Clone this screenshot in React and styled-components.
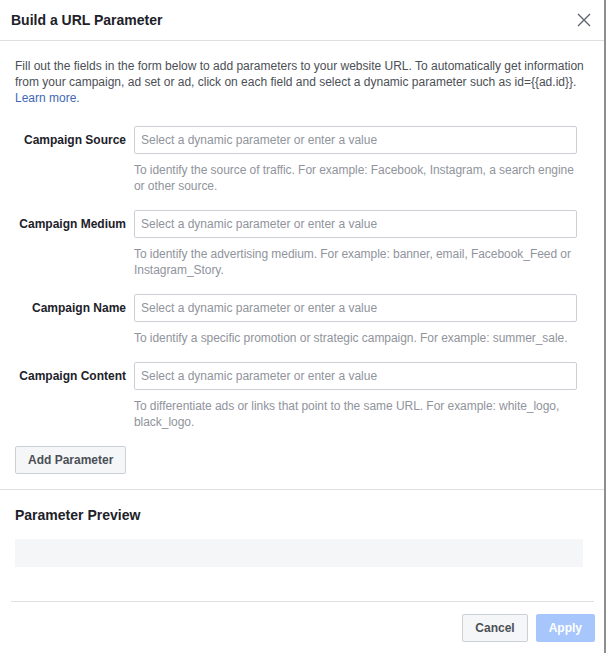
import { createGlobalStyle, styled } from "styled-components";

const GlobalStyle = createGlobalStyle`
  html, body {
    margin: 0;
    padding: 0;
    background: #fff;
  }
  body {
    font-family: "Liberation Sans", Arial, sans-serif;
    color: #1d2129;
  }
`;

const Dialog = styled.div`
  width: 606px;
  height: 653px;
  box-sizing: border-box;
  background: #fff;
  border-right: 2px solid #8f8f8f;
  display: flex;
  flex-direction: column;
`;

const Header = styled.div`
  height: 41px;
  box-sizing: border-box;
  border-bottom: 1px solid #dddfe2;
  display: flex;
  align-items: center;
  justify-content: space-between;
  padding: 0 10px 0 11px;
`;

const Title = styled.h2`
  margin: 0;
  font-size: 14px;
  font-weight: 700;
  color: #1d2129;
`;

const CloseButton = styled.button`
  border: 0;
  background: none;
  padding: 0;
  width: 20px;
  height: 20px;
  display: flex;
  align-items: center;
  justify-content: center;
  cursor: pointer;
`;

const Body = styled.div`
  padding: 17px 15px 0 15px;
`;

const Intro = styled.p`
  margin: 0 0 20px;
  font-size: 12px;
  line-height: 16px;
  color: #4b4f56;
`;

const Link = styled.a`
  color: #4267b2;
  text-decoration: none;
`;

const Field = styled.div`
  display: grid;
  grid-template-columns: 111px 443px;
  column-gap: 8px;
  margin-bottom: 16px;
`;

const Label = styled.label`
  font-size: 12px;
  font-weight: 700;
  color: #1d2129;
  text-align: right;
  line-height: 28px;
  white-space: nowrap;
`;

const Input = styled.input`
  height: 28px;
  box-sizing: border-box;
  border: 1px solid #ccd0d5;
  border-radius: 2px;
  padding: 0 6px;
  font-family: inherit;
  font-size: 12px;
  color: #1d2129;
  outline: none;

  &::placeholder {
    color: #90949c;
  }
`;

const Help = styled.div`
  grid-column: 2;
  margin-top: 8px;
  margin-right: -6px;
  font-size: 12px;
  line-height: 16px;
  letter-spacing: -0.05px;
  color: #90949c;
`;

const Button = styled.button`
  height: 28px;
  box-sizing: border-box;
  padding: 0 12px;
  border-radius: 2px;
  font-family: inherit;
  font-size: 12px;
  font-weight: 700;
  cursor: pointer;
  border: 1px solid ${(p) => (p.$primary ? "#a7c6fb" : "#ccd0d5")};
  background: ${(p) => (p.$primary ? "#a7c6fb" : "#f5f6f7")};
  color: ${(p) => (p.$primary ? "#fff" : "#4b4f56")};
`;

const Preview = styled.div`
  border-top: 1px solid #dddfe2;
  margin-top: 15px;
  padding: 17px 15px 0 15px;
`;

const SectionTitle = styled.h3`
  margin: 0 0 16px;
  font-size: 14px;
  font-weight: 700;
  color: #1d2129;
`;

const PreviewBox = styled.div`
  height: 28px;
  width: 568px;
  background: #f5f6f7;
`;

const Footer = styled.div`
  margin: 34px 10px 0 11px;
  border-top: 1px solid #dddfe2;
  padding: 12px 0 0 0;
  display: flex;
  justify-content: flex-end;
  gap: 8px;

  & > button:last-child {
    margin-right: -1px;
  }
`;

const fields = [
  {
    label: "Campaign Source",
    help: "To identify the source of traffic. For example: Facebook, Instagram, a search engine or other source.",
  },
  {
    label: "Campaign Medium",
    help: "To identify the advertising medium. For example: banner, email, Facebook_Feed or Instagram_Story.",
  },
  {
    label: "Campaign Name",
    help: "To identify a specific promotion or strategic campaign. For example: summer_sale.",
  },
  {
    label: "Campaign Content",
    help: "To differentiate ads or links that point to the same URL. For example: white_logo, black_logo.",
  },
];

const intro =
  "Fill out the fields in the form below to add parameters to your website URL. To automatically get information from your campaign, ad set or ad, click on each field and select a dynamic parameter such as id={{ad.id}}. ";

const App = () => {
  return (
    <>
      <GlobalStyle />
      <Dialog>
        <Header>
          <Title>Build a URL Parameter</Title>
          <CloseButton aria-label="Close">
            <svg width="14" height="14" viewBox="0 0 14 14">
              <path d="M1 1L13 13M13 1L1 13" stroke="#606770" strokeWidth="1.4" />
            </svg>
          </CloseButton>
        </Header>
        <Body>
          <Intro>
            {intro}
            <Link href="#">Learn more.</Link>
          </Intro>
          {fields.map((f) => (
            <Field key={f.label}>
              <Label>{f.label}</Label>
              <Input placeholder="Select a dynamic parameter or enter a value" />
              <Help>{f.help}</Help>
            </Field>
          ))}
          <Button>Add Parameter</Button>
        </Body>
        <Preview>
          <SectionTitle>Parameter Preview</SectionTitle>
          <PreviewBox />
        </Preview>
        <Footer>
          <Button>Cancel</Button>
          <Button $primary>Apply</Button>
        </Footer>
      </Dialog>
    </>
  );
};

export default App;
